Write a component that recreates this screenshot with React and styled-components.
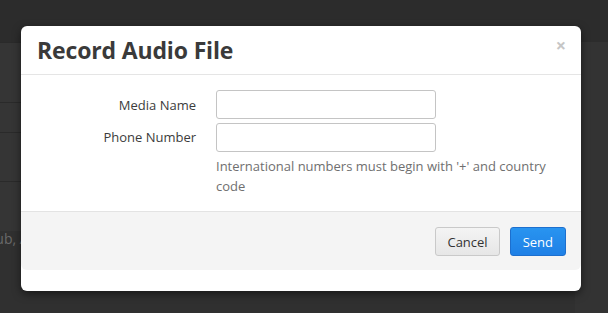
import React from "react";
import styled, { createGlobalStyle } from "styled-components";

const GlobalStyle = createGlobalStyle`
  html, body { margin: 0; padding: 0; }
  body {
    background: #333333;
    font-family: "Open Sans", "Noto Sans", sans-serif;
    -webkit-font-smoothing: antialiased;
  }
  * { box-sizing: border-box; }
`;

const Page = styled.div`
  position: relative;
  width: 608px;
  height: 313px;
  overflow: hidden;
  background: #333333;
`;

const TopBar = styled.div`
  height: 42px;
  background: #2c2c2c;
`;

const Table = styled.div`
  width: 575px;
  display: flex;
  flex-direction: column;
  background: #353535;
`;

const Row = styled.div`
  height: ${(p) => p.$h}px;
  border-top: 1px solid #2a2a2a;
`;

const Below = styled.div`
  width: 575px;
  height: 82px;
  background: #303030;
  padding-top: 0;
  font-size: 14px;
  line-height: 16px;
  color: #6a6a6a;
  white-space: nowrap;
`;

const BelowText = styled.span`
  display: inline-block;
  margin-left: -17px;
`;

const Modal = styled.div`
  position: absolute;
  left: 21px;
  top: 26px;
  width: 560px;
  height: 265px;
  background: #ffffff;
  border-radius: 6px;
  box-shadow: 0 3px 9px rgba(0, 0, 0, 0.5);
  display: flex;
  flex-direction: column;
`;

const Header = styled.div`
  height: 49px;
  flex: none;
  border-bottom: 1px solid #e5e5e5;
  display: flex;
  align-items: center;
  justify-content: space-between;
  padding: 0 15px 0 16px;
`;

const Title = styled.h3`
  margin: 0;
  font-size: 23px;
  font-weight: 700;
  color: #3a3a3a;
  line-height: 1;
  letter-spacing: -0.15px;
`;

const Close = styled.button`
  border: 0;
  background: none;
  padding: 0;
  margin-top: -10px;
  font-family: "Open Sans", sans-serif;
  font-size: 18px;
  font-weight: 700;
  line-height: 1;
  color: #c6c6c6;
  cursor: pointer;
`;

const Body = styled.div`
  padding: 15px;
  display: flex;
  flex-direction: column;
  gap: 4px;
  height: 136px;
  flex: none;
`;

const FieldRow = styled.div`
  display: grid;
  grid-template-columns: 160px 1fr;
  column-gap: 20px;
  align-items: ${(p) => (p.$top ? "start" : "center")};
`;

const Label = styled.label`
  text-align: right;
  font-size: 13px;
  color: #3c3c3c;
  line-height: ${(p) => (p.$tall ? "29px" : "normal")};
`;

const Controls = styled.div`
  display: flex;
  flex-direction: column;
`;

const Input = styled.input`
  width: 220px;
  height: 29px;
  border: 1px solid #c4c4c4;
  border-radius: 3px;
  background: #fff;
  font-family: inherit;
  font-size: 13px;
  padding: 4px 8px;
  outline: none;
`;

const Help = styled.p`
  margin: 4px 0 0;
  width: 340px;
  font-size: 13px;
  line-height: 20px;
  color: #6f6f6f;
`;

const Footer = styled.div`
  height: 59px;
  flex: none;
  border-top: 1px solid #e3e3e3;
  background: #f4f4f4;
  border-radius: 0 0 6px 6px;
  display: flex;
  justify-content: flex-end;
  align-items: flex-start;
  gap: 10px;
  padding: 15px 15px 0 15px;
`;

const Button = styled.button`
  height: 29px;
  padding: 0 ${(p) => (p.$primary ? 12 : 11)}px;
  font-family: "Open Sans", sans-serif;
  font-size: 13px;
  border-radius: 3px;
  cursor: pointer;
  color: ${(p) => (p.$primary ? "#ffffff" : "#333333")};
  border: 1px solid ${(p) => (p.$primary ? "#1d6fce" : "#c9c9c9")};
  background: ${(p) =>
    p.$primary
      ? "linear-gradient(#2894f0, #1f80e6)"
      : "linear-gradient(#f4f4f4, #e6e6e6)"};
`;

export default function App() {
  return (
    <>
      <GlobalStyle />
      <Page>
        <TopBar />
        <Table>
          <Row $h={60} />
          <Row $h={30} />
          <Row $h={49} />
          <Row $h={50} />
        </Table>
        <Below>
          <BelowText>Club, Ace Events</BelowText>
        </Below>
        <Modal role="dialog" aria-label="Record Audio File">
          <Header>
            <Title>Record Audio File</Title>
            <Close aria-label="Close">×</Close>
          </Header>
          <Body>
            <FieldRow>
              <Label>Media Name</Label>
              <Input type="text" />
            </FieldRow>
            <FieldRow $top>
              <Label $tall>Phone Number</Label>
              <Controls>
                <Input type="text" />
                <Help>
                  International numbers must begin with '+' and country code
                </Help>
              </Controls>
            </FieldRow>
          </Body>
          <Footer>
            <Button>Cancel</Button>
            <Button $primary>Send</Button>
          </Footer>
        </Modal>
      </Page>
    </>
  );
}
